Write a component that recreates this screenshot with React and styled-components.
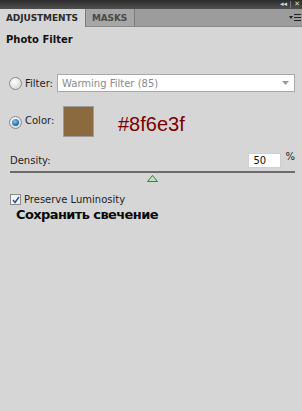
import styled, { createGlobalStyle } from "styled-components";

const Global = createGlobalStyle`
  html, body {
    margin: 0;
    padding: 0;
    background: #d6d6d6;
  }
  body {
    font-family: "DejaVu Sans", Tahoma, sans-serif;
  }
`;

const Panel = styled.div`
  width: 302px;
  height: 411px;
  background: #d6d6d6;
  overflow: hidden;
`;

const TitleBar = styled.div`
  height: 9px;
  background: linear-gradient(#2c2c2c, #505050);
  display: flex;
  justify-content: flex-end;
  align-items: center;
  gap: 3px;
  padding-right: 2px;
  color: #d8d8d8;
  font-size: 7px;
  line-height: 9px;
`;

const Sep = styled.span`
  width: 1px;
  height: 7px;
  background: #777;
`;

const TabRow = styled.div`
  height: 17px;
  display: flex;
  align-items: stretch;
  background: #9c9c9c;
  border-bottom: 1px solid #8a8a8a;
`;

const Tab = styled.div`
  padding: 0 7px 0 6px;
  display: flex;
  align-items: center;
  font-family: "DejaVu Sans", sans-serif;
  font-weight: bold;
  font-size: 9px;
  letter-spacing: -0.1px;
  color: ${(p) => (p.$active ? "#2b2b2b" : "#4a4a4a")};
  background: ${(p) => (p.$active ? "#d6d6d6" : "#a6a6a6")};
  border-right: 1px solid #7c7c7c;
  margin-bottom: ${(p) => (p.$active ? "-1px" : "0")};
`;

const TabFill = styled.div`
  flex: 1;
  display: flex;
  justify-content: flex-end;
  align-items: center;
  padding-right: 1px;
`;

const Body = styled.div`
  padding: 7px 7px 0 6px;
`;

const Heading = styled.div`
  font-family: "DejaVu Sans", sans-serif;
  font-weight: bold;
  font-size: 10px;
  color: #111;
  height: 12px;
  line-height: 12px;
`;

const Row = styled.div`
  display: flex;
  align-items: ${(p) => p.$align || "center"};
  margin-top: ${(p) => p.$mt || 0}px;
`;

const Radio = styled.span`
  width: 11px;
  height: 11px;
  border-radius: 50%;
  border: 1px solid #8a8a8a;
  background: radial-gradient(circle at 40% 35%, #ffffff, #dcdcdc 70%);
  margin-left: 3px;
  margin-right: 3px;
  margin-top: ${(p) => p.$mt || 0}px;
  display: flex;
  align-items: center;
  justify-content: center;
  flex-shrink: 0;
  &::after {
    content: "";
    display: ${(p) => (p.$on ? "block" : "none")};
    width: 7px;
    height: 7px;
    border-radius: 50%;
    background: radial-gradient(circle at 40% 35%, #7fc4ee, #1d6aa6 70%);
  }
`;

const Label = styled.span`
  font-family: "DejaVu Sans", sans-serif;
  font-size: 10px;
  color: #1e1e1e;
  width: ${(p) => (p.$w ? p.$w + "px" : "auto")};
  margin-top: ${(p) => p.$mt || 0}px;
`;

const Select = styled.div`
  flex: 1;
  height: 16px;
  background: #fff;
  border: 1px solid #a9a9a9;
  display: flex;
  align-items: center;
  justify-content: space-between;
  padding: 0 5px 0 4px;
  font-family: "DejaVu Sans", sans-serif;
  font-size: 10px;
  color: #8a8a8a;
`;

const Swatch = styled.div`
  width: 29px;
  height: 29px;
  background: #8a6a3e;
  border: 1px solid #9c9c9c;
`;

const HexNote = styled.span`
  font-family: "Liberation Sans", Arial, sans-serif;
  font-size: 20px;
  color: #7a0000;
  margin-left: 24px;
  margin-top: 7px;
`;

const DensityRow = styled.div`
  display: flex;
  align-items: center;
  margin-top: 16px;
  padding-left: 4px;
`;

const NumInput = styled.div`
  margin-left: auto;
  width: 33px;
  height: 15px;
  background: #fff;
  border: 1px solid #cfcfcf;
  font-family: "DejaVu Sans", sans-serif;
  font-size: 10px;
  color: #111;
  display: flex;
  align-items: center;
  padding-left: 4px;
  box-sizing: border-box;
`;

const Pct = styled.span`
  font-family: "DejaVu Sans", sans-serif;
  font-size: 10px;
  color: #222;
  margin-left: 4px;
  align-self: flex-start;
  margin-top: -2px;
`;

const Track = styled.div`
  margin: 3px 0 0 4px;
  height: 2px;
  background: #6c6c6c;
`;

const ThumbWrap = styled.div`
  display: flex;
  justify-content: center;
  margin-top: 2px;
  padding-left: 4px;
  height: 8px;
`;

const Check = styled.span`
  width: 9px;
  height: 9px;
  border: 1px solid #8a8a8a;
  background: #f4f4f4;
  margin-left: 4px;
  margin-right: 3px;
  display: flex;
  align-items: center;
  justify-content: center;
`;

const Russian = styled.div`
  font-family: "DejaVu Sans", sans-serif;
  font-weight: bold;
  font-size: 13px;
  color: #0a0a0a;
  margin-left: 10px;
  margin-top: 2px;
  letter-spacing: -0.6px;
`;

export default function App() {
  return (
    <Panel>
      <Global />
      <TitleBar>
        <span>◂◂</span>
        <Sep />
        <span>✕</span>
      </TitleBar>
      <TabRow>
        <Tab $active>ADJUSTMENTS</Tab>
        <Tab>MASKS</Tab>
        <TabFill>
          <svg width="12" height="9" viewBox="0 0 12 9">
            <path d="M0 3 L4 3 L2 6 Z" fill="#222" />
            <rect x="5" y="1" width="7" height="1" fill="#222" />
            <rect x="5" y="4" width="7" height="1" fill="#222" />
            <rect x="5" y="7" width="7" height="1" fill="#222" />
          </svg>
        </TabFill>
      </TabRow>
      <Body>
        <Heading>Photo Filter</Heading>
        <Row $mt={28}>
          <Radio />
          <Label $w={32}>Filter:</Label>
          <Select>
            <span>Warming Filter (85)</span>
            <svg width="7" height="4" viewBox="0 0 7 4">
              <path d="M0 0 L7 0 L3.5 4 Z" fill="#9a9a9a" />
            </svg>
          </Select>
        </Row>
        <Row $mt={14} $align="flex-start">
          <Radio $on $mt={10} />
          <Label $w={38} $mt={9}>
            Color:
          </Label>
          <Swatch />
          <HexNote>#8f6e3f</HexNote>
        </Row>
        <DensityRow>
          <Label>Density:</Label>
          <NumInput>50</NumInput>
          <Pct>%</Pct>
        </DensityRow>
        <Track />
        <ThumbWrap>
          <svg width="11" height="7" viewBox="0 0 11 7">
            <path d="M5.5 0.5 L10.5 6.5 L0.5 6.5 Z" fill="#bfe3c2" stroke="#3f7a45" strokeWidth="1" />
          </svg>
        </ThumbWrap>
        <Row $mt={11}>
          <Check>
            <svg width="8" height="8" viewBox="0 0 8 8">
              <path d="M1 4 L3 6.5 L7 1" fill="none" stroke="#2a4f9a" strokeWidth="1.5" />
            </svg>
          </Check>
          <Label>Preserve Luminosity</Label>
        </Row>
        <Russian>Сохранить свечение</Russian>
      </Body>
    </Panel>
  );
}
